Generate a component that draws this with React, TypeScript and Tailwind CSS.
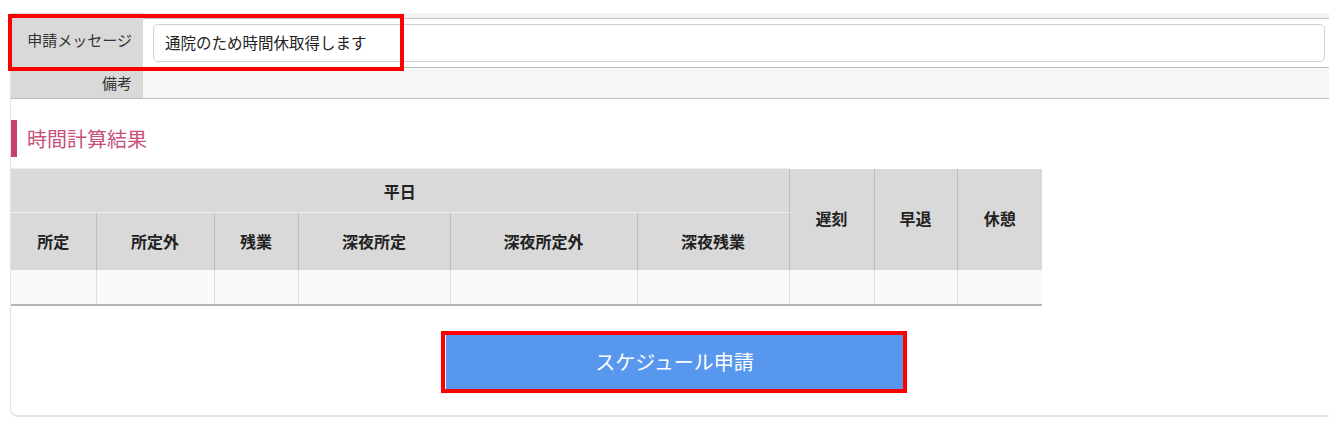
import React from "react";

const font = { fontFamily: '"Noto Sans CJK JP", "Noto Sans", sans-serif' };

const cols = [
  { name: "所定", w: 85 },
  { name: "所定外", w: 118 },
  { name: "残業", w: 84 },
  { name: "深夜所定", w: 152 },
  { name: "深夜所定外", w: 187 },
  { name: "深夜残業", w: 152 },
];

const extra = [
  { name: "遅刻", w: 85 },
  { name: "早退", w: 83 },
  { name: "休憩", w: 85 },
];

export default function App() {
  return (
    <div className="relative h-[429px] w-[1329px] overflow-hidden bg-white pl-[10px] pt-[13px]" style={font}>
      <div className="flex h-[404px] w-[1328px] flex-col rounded-bl-lg border-b-2 border-l border-[#e3e3e3]">
        {/* form rows */}
        <div className="flex h-[55px] border-b border-[#bdbdbd]">
          <div className="flex w-[132px] items-center justify-end bg-[#d9d9d9] pr-[11px] text-[15px] text-[#333]">
            申請メッセージ
          </div>
          <div className="flex flex-1 flex-col">
            <div className="h-[5px] bg-[#f3f3f3]" />
            <div className="flex-1 border-t border-[#c4c4c4] bg-white pl-[10px] pr-[13px] pt-[5px]">
              <div className="flex h-[38px] items-center rounded-[5px] border border-[#cfcfcf] px-[11px] text-[15.5px] text-[#222]">
                通院のため時間休取得します
              </div>
            </div>
          </div>
        </div>
        <div className="flex h-[31px] border-b border-[#bdbdbd]">
          <div className="flex w-[132px] items-center justify-end bg-[#d9d9d9] pr-[11px] text-[15px] text-[#333]">
            備考
          </div>
          <div className="flex-1 bg-[#f7f7f7]" />
        </div>

        {/* heading */}
        <div className="mt-[21px] flex h-[37px] items-center">
          <div className="h-full w-[6px] bg-[#c63f6e]" />
          <span className="ml-[10px] text-[20px] text-[#c9507c]">時間計算結果</span>
        </div>

        {/* result table */}
        <table className="mt-[11px] w-[1031px] table-fixed border-collapse text-[16px] font-bold leading-none text-[#222]">
          <colgroup>
            {[...cols, ...extra].map((c) => (
              <col key={c.name} style={{ width: c.w }} />
            ))}
          </colgroup>
          <thead>
            <tr className="bg-[#d9d9d9]">
              <th colSpan={6} className="h-[44px] border-t border-b border-[#ececec] p-0 text-center font-bold">
                平日
              </th>
              {extra.map((c) => (
                <th
                  key={c.name}
                  rowSpan={2}
                  className="border-l border-[#bdbdbd] p-0 pb-[2px] align-middle font-bold"
                >
                  {c.name}
                </th>
              ))}
            </tr>
            <tr className="bg-[#d9d9d9]">
              {cols.map((c, i) => (
                <th key={c.name} className={`h-[57px] p-0 font-bold ${i > 0 ? "border-l border-[#bdbdbd]" : ""}`}>
                  {c.name}
                </th>
              ))}
            </tr>
          </thead>
          <tbody>
            <tr className="border-b-2 border-[#b5b5b5] bg-[#f9f9f9]">
              {[...cols, ...extra].map((c, i) => (
                <td key={c.name} className={`h-[35px] p-0 ${i > 0 ? "border-l border-[#dcdcdc]" : ""}`} />
              ))}
            </tr>
          </tbody>
        </table>

        {/* submit */}
        <div className="mt-[29px] flex justify-center">
          <button className="h-[54px] w-[458px] bg-[#5897ee] text-[20px] text-white">
            スケジュール申請
          </button>
        </div>
      </div>

      {/* annotation boxes */}
      <div className="pointer-events-none absolute left-[8px] top-[14px] h-[57px] w-[396px] border-4 border-[#ff0000]" />
      <div className="pointer-events-none absolute left-[441px] top-[331px] h-[62px] w-[466px] border-4 border-[#ff0000]" />
    </div>
  );
}
